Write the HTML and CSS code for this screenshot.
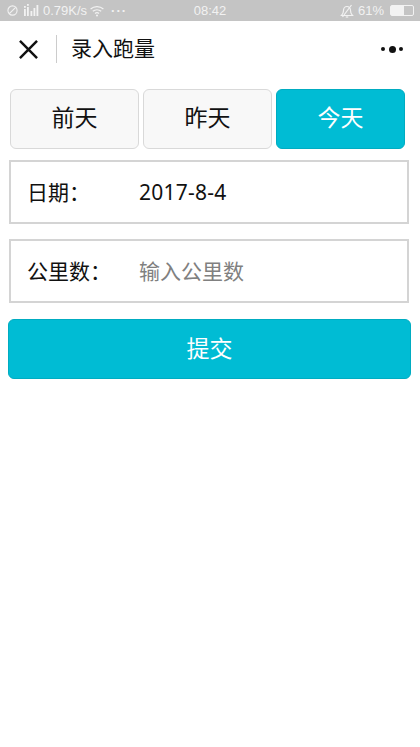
FILE: index.html
```html
<!DOCTYPE html>
<html lang="zh-CN">
<head>
  <meta charset="UTF-8" />
  <title>录入跑量</title>
  <link rel="stylesheet" href="styles.css">
</head>
<body>
  <div class="status-bar">
    <div class="status-left">
      <svg class="icon-block" viewBox="0 0 12 12"><circle cx="6" cy="6" r="5" /><path d="M2.500 9.500 9.500 2.500" /></svg>
      <svg class="icon-signal" viewBox="0 0 15 13"><rect x="0" y="2" width="1.800" height="1.800" /><rect x="3" y="0" width="1.800" height="1.800" /><rect x="0" y="5" width="1.800" height="7" /><rect x="3" y="3" width="1.800" height="9" /><rect x="6.500" y="7" width="1.800" height="5" /><rect x="9.500" y="4" width="1.800" height="8" /><rect x="12.500" y="1" width="1.800" height="11" /></svg>
      <span>0.79K/s</span>
      <svg class="icon-wifi" viewBox="0 0 14 12"><path d="M.6 4C4.200.8 9.800.8 13.400 4" /><path d="M2.800 6.300c2.400-2 6-2 8.400 0" /><path d="M5 8.500c1.200-1 2.800-1 4 0" /><circle class="fill" cx="7" cy="10.600" r="1" /></svg>
      <span class="status-dots">···</span>
    </div>
    <div class="status-time">08:42</div>
    <div class="status-right">
      <svg class="icon-bell" viewBox="0 0 14 14"><path d="M1.500 11.500h11c-1.500-1.500-2-3-2-5 0-2.200-1.500-4-3.500-4s-3.500 1.800-3.500 4c0 2-.5 3.500-2 5Z" /><path d="M5.800 13h2.400" /><path d="M2.500 13 11.500 1" /></svg>
      <span>61%</span>
      <div class="battery"><div class="battery-level"></div></div>
    </div>
  </div>

  <div class="nav-bar">
    <svg class="icon-close" viewBox="0 0 20 20"><path d="M1 1 19 19M19 1 1 19" /></svg>
    <div class="nav-title">录入跑量</div>
    <div class="nav-more"><i></i><b></b><i></i></div>
  </div>

  <div class="day-tabs">
    <div class="day-tab">前天</div>
    <div class="day-tab">昨天</div>
    <div class="day-tab active">今天</div>
  </div>

  <div class="field date-field">
    <div class="field-label">日期<span class="colon">：</span></div>
    <div class="field-value date-value">2017-8-4</div>
  </div>

  <div class="field km-field">
    <div class="field-label">公里数<span class="colon">：</span></div>
    <div class="field-value placeholder">输入公里数</div>
  </div>

  <div class="submit-btn">提交</div>
</body>
</html>
```

FILE: styles.css
```css
body {
  margin: 0;
  width: 420px;
  height: 747px;
  overflow: hidden;
  background-color: white;
  color: #111;
  font-family: "Noto Sans", "Noto Sans CJK SC", sans-serif;
}

.status-bar {
  height: 21px;
  background-color: #c4c4c4;
  color: #f2f2f2;
  font-family: "Liberation Sans", sans-serif;
  font-size: 13px;
  display: flex;
  align-items: center;
  justify-content: space-between;
  padding: 0 6px 0 7px;
  box-sizing: border-box;
  position: relative;
}

.status-left,
.status-right {
  display: flex;
  align-items: center;
}

.status-time {
  position: absolute;
  left: 0;
  right: 0;
  text-align: center;
}

.status-dots {
  margin-left: 7px;
  letter-spacing: 1px;
  font-weight: bold;
}

.status-bar svg {
  fill: none;
  stroke: #f2f2f2;
  stroke-width: 1.2;
}

.icon-block { width: 11px; height: 11px; margin-right: 6px; }
.icon-signal { width: 15px; height: 13px; margin-right: 4px; }
.status-bar .icon-signal { fill: #f2f2f2; stroke: none; }
.icon-wifi { width: 14px; height: 12px; margin-left: 3px; }
.status-bar .fill { fill: #f2f2f2; stroke: none; }
.icon-bell { width: 14px; height: 14px; margin-right: 4px; }

.battery {
  width: 24px;
  height: 11px;
  border: 1px solid #f2f2f2;
  border-radius: 2px;
  box-sizing: border-box;
  margin-left: 6px;
}

.battery-level {
  width: 61%;
  height: 100%;
  background-color: #f2f2f2;
}

.nav-bar {
  height: 56px;
  display: flex;
  align-items: center;
  position: relative;
}

.icon-close {
  width: 19px;
  height: 19px;
  margin-left: 19px;
  fill: none;
  stroke: #111;
  stroke-width: 2.6;
}

.nav-title {
  margin-left: 18px;
  padding-left: 14px;
  border-left: 1px solid #ccc;
  height: 28px;
  line-height: 26px;
  font-size: 21px;
}

.nav-more {
  margin-left: auto;
  margin-right: 17px;
  display: flex;
  align-items: center;
  gap: 3.500px;
}

.nav-more i {
  width: 4px;
  height: 4px;
  border-radius: 50%;
  background-color: #111;
}

.nav-more b {
  width: 7px;
  height: 7px;
  border-radius: 50%;
  background-color: #111;
}

.day-tabs {
  display: flex;
  gap: 4px;
  margin: 12px 0 0 10px;
}

.day-tab {
  width: 129px;
  height: 60px;
  line-height: 55px;
  box-sizing: border-box;
  text-align: center;
  font-size: 23px;
  background-color: #f8f8f8;
  border: 1px solid #d9d9d9;
  border-radius: 6px;
}

.day-tab.active {
  background-color: #00bcd4;
  border-color: #00acc1;
  color: white;
}

.field {
  width: 400px;
  height: 64px;
  margin-left: 9px;
  box-sizing: border-box;
  border: 2px solid #d4d4d4;
  display: flex;
  align-items: center;
  font-size: 21px;
}

.date-field { margin-top: 11px; }
.km-field { margin-top: 15px; }

.field-label {
  width: 111px;
  padding: 0 0 2px 16px;
  box-sizing: border-box;
  white-space: nowrap;
}

.colon {
  font-family: "Noto Sans CJK TC", sans-serif;
}

.field-value {
  margin-left: 17px;
}

.date-value {
  letter-spacing: 0.25px;
}

.placeholder {
  color: #808080;
  padding-bottom: 2px;
}

.submit-btn {
  width: 403px;
  height: 60px;
  line-height: 56px;
  margin: 16px 0 0 8px;
  box-sizing: border-box;
  text-align: center;
  font-size: 23px;
  color: white;
  background-color: #00bcd4;
  border: 1px solid #00acc1;
  border-radius: 6px;
}
```
